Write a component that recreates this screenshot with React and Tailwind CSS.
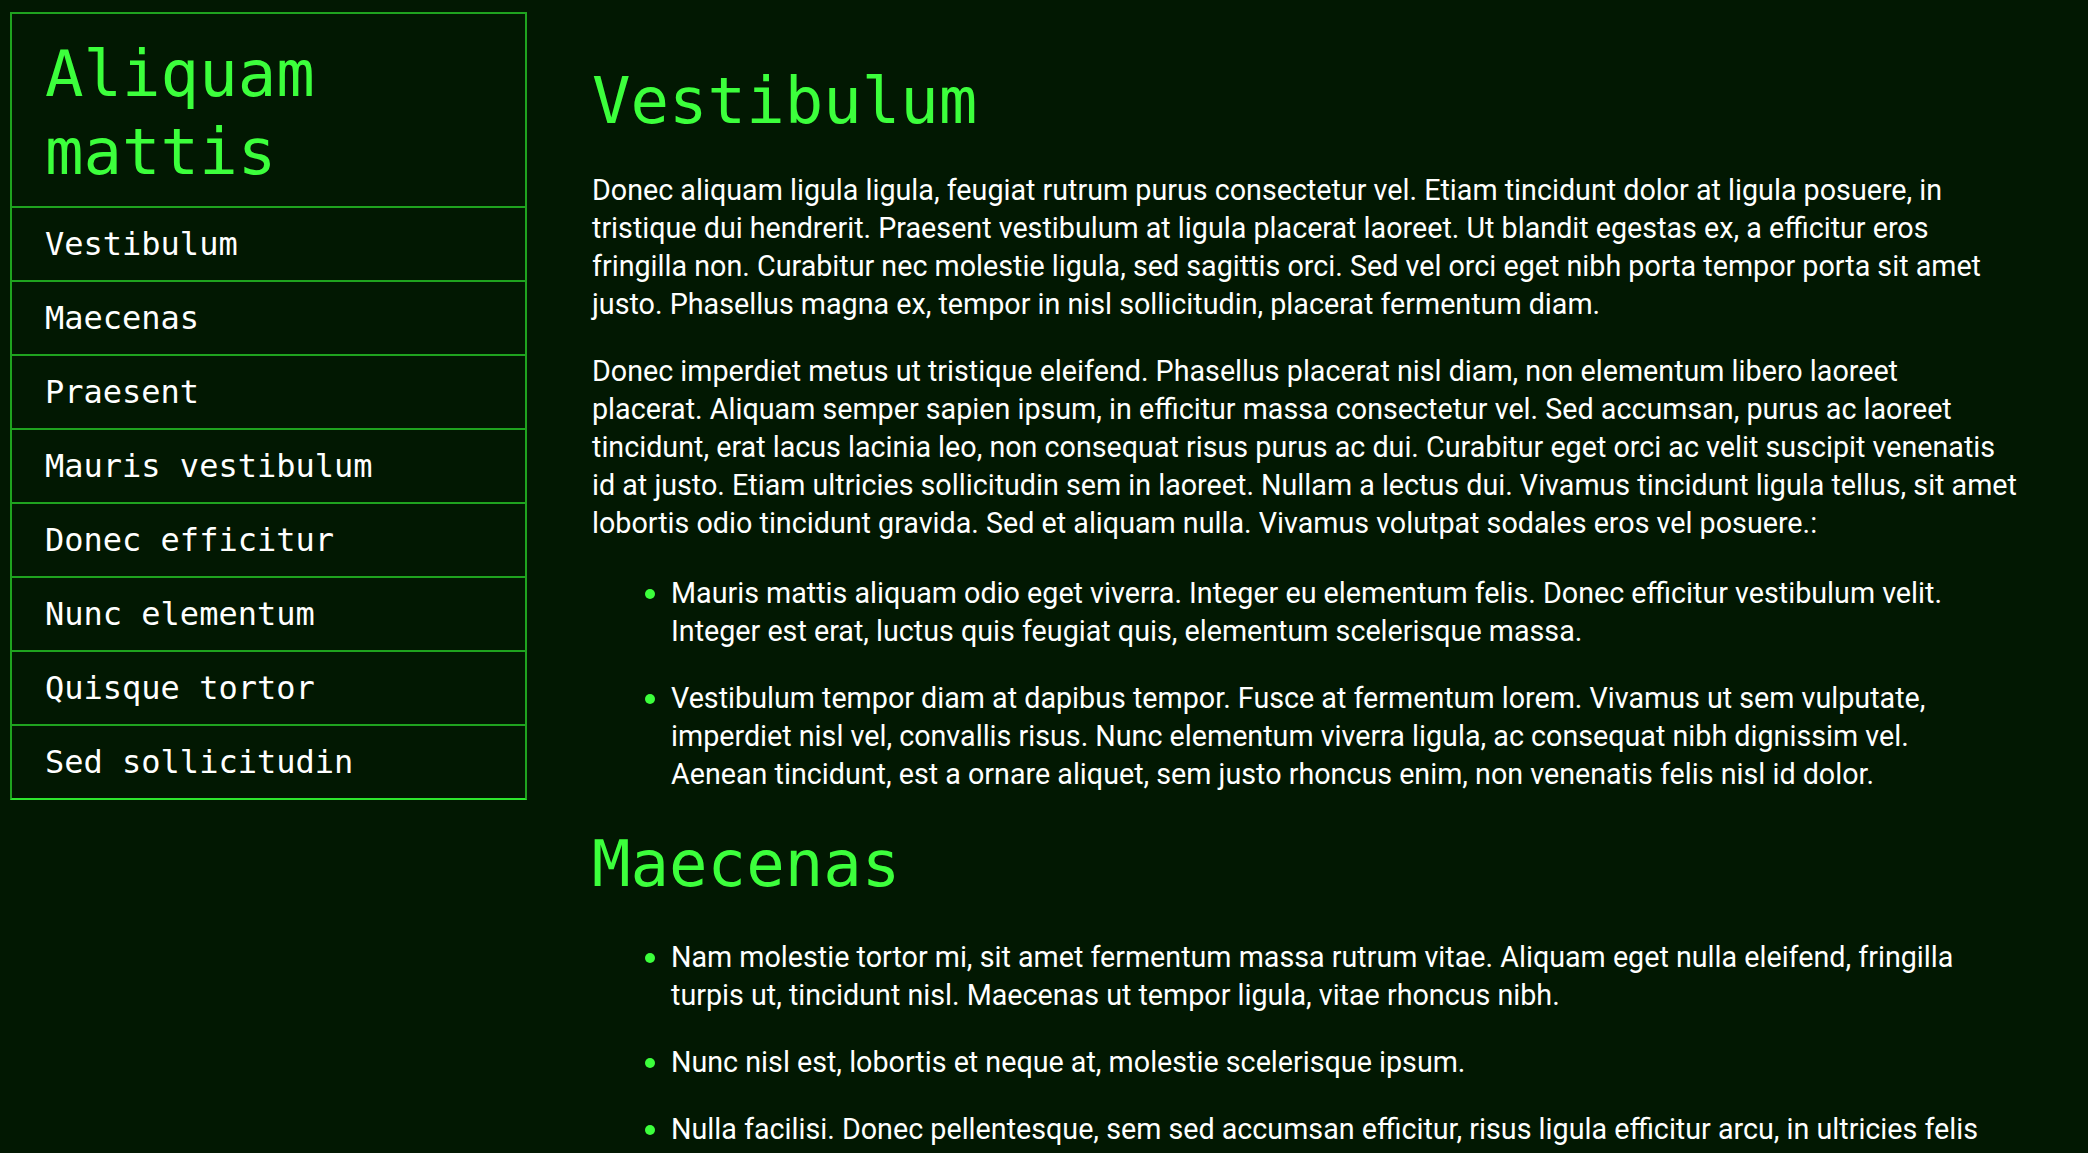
const NAV = [
  "Vestibulum",
  "Maecenas",
  "Praesent",
  "Mauris vestibulum",
  "Donec efficitur",
  "Nunc elementum",
  "Quisque tortor",
  "Sed sollicitudin",
];

function Lines({ lines }) {
  return lines.map((l, i) => (
    <span key={i}>
      {l}
      {i < lines.length - 1 ? <br /> : null}
    </span>
  ));
}

function Bullet({ lines }) {
  return (
    <li className="flex items-start">
      <span className="ml-[53px] mt-[14.5px] w-[10px] h-[10px] shrink-0 rounded-full bg-[#3cff3c]" />
      <span className="ml-[16px]">
        <Lines lines={lines} />
      </span>
    </li>
  );
}

export default function App() {
  return (
    <div className="min-h-screen bg-[#021802] flex items-start">
      <aside className="ml-[10px] mt-[12px] w-[517px] shrink-0 border-2 border-[#1fa31f] border-b-[#2ee62e] font-['DejaVu_Sans_Mono',monospace]">
        <h1 className="pl-[33px] pr-[20px] pt-[21px] pb-[15px] text-[64px] leading-[78px] font-normal text-[#3cff3c] border-b-2 border-[#1fa31f]">
          Aliquam mattis
        </h1>
        <nav className="flex flex-col">
          {NAV.map((item, i) => (
            <a
              key={item}
              href="#"
              className={
                "flex items-center pl-[33px] text-[32px] text-white " +
                (i < NAV.length - 1 ? "h-[74px] border-b-2 border-[#1fa31f]" : "h-[72px]")
              }
            >
              {item}
            </a>
          ))}
        </nav>
      </aside>

      <main className="flex-1 min-w-0 pt-[63px] pl-[65px] pr-[36px] flex flex-col text-white font-['Roboto',sans-serif] text-[28.7px] leading-[38px]">
        <h2 className="mb-[31px] font-['DejaVu_Sans_Mono',monospace] text-[64px] leading-[77px] font-normal text-[#3cff3c]">
          Vestibulum
        </h2>
        <p className="mb-[28.5px]">
          <Lines
            lines={[
              "Donec aliquam ligula ligula, feugiat rutrum purus consectetur vel. Etiam tincidunt dolor at ligula posuere, in",
              "tristique dui hendrerit. Praesent vestibulum at ligula placerat laoreet. Ut blandit egestas ex, a efficitur eros",
              "fringilla non. Curabitur nec molestie ligula, sed sagittis orci. Sed vel orci eget nibh porta tempor porta sit amet",
              "justo. Phasellus magna ex, tempor in nisl sollicitudin, placerat fermentum diam.",
            ]}
          />
        </p>
        <p className="mb-[28.5px]">
          <Lines
            lines={[
              "Donec imperdiet metus ut tristique eleifend. Phasellus placerat nisl diam, non elementum libero laoreet",
              "placerat. Aliquam semper sapien ipsum, in efficitur massa consectetur vel. Sed accumsan, purus ac laoreet",
              "tincidunt, erat lacus lacinia leo, non consequat risus purus ac dui. Curabitur eget orci ac velit suscipit venenatis",
              "id at justo. Etiam ultricies sollicitudin sem in laoreet. Nullam a lectus dui. Vivamus tincidunt ligula tellus, sit amet",
              "lobortis odio tincidunt gravida. Sed et aliquam nulla. Vivamus volutpat sodales eros vel posuere.:",
            ]}
          />
        </p>
        <ul className="mt-[4px] mb-[33px] flex flex-col gap-[29px]">
          <Bullet
            lines={[
              "Mauris mattis aliquam odio eget viverra. Integer eu elementum felis. Donec efficitur vestibulum velit.",
              "Integer est erat, luctus quis feugiat quis, elementum scelerisque massa.",
            ]}
          />
          <Bullet
            lines={[
              "Vestibulum tempor diam at dapibus tempor. Fusce at fermentum lorem. Vivamus ut sem vulputate,",
              "imperdiet nisl vel, convallis risus. Nunc elementum viverra ligula, ac consequat nibh dignissim vel.",
              "Aenean tincidunt, est a ornare aliquet, sem justo rhoncus enim, non venenatis felis nisl id dolor.",
            ]}
          />
        </ul>
        <h2 className="mb-[31px] font-['DejaVu_Sans_Mono',monospace] text-[64px] leading-[77px] font-normal text-[#3cff3c]">
          Maecenas
        </h2>
        <ul className="mt-[4px] mb-[33px] flex flex-col gap-[29px]">
          <Bullet
            lines={[
              "Nam molestie tortor mi, sit amet fermentum massa rutrum vitae. Aliquam eget nulla eleifend, fringilla",
              "turpis ut, tincidunt nisl. Maecenas ut tempor ligula, vitae rhoncus nibh.",
            ]}
          />
          <Bullet lines={["Nunc nisl est, lobortis et neque at, molestie scelerisque ipsum."]} />
          <Bullet
            lines={[
              "Nulla facilisi. Donec pellentesque, sem sed accumsan efficitur, risus ligula efficitur arcu, in ultricies felis",
              "tortor vel lorem. Sed vitae sapien nec nunc vulputate tincidunt.",
            ]}
          />
        </ul>
      </main>
    </div>
  );
}
